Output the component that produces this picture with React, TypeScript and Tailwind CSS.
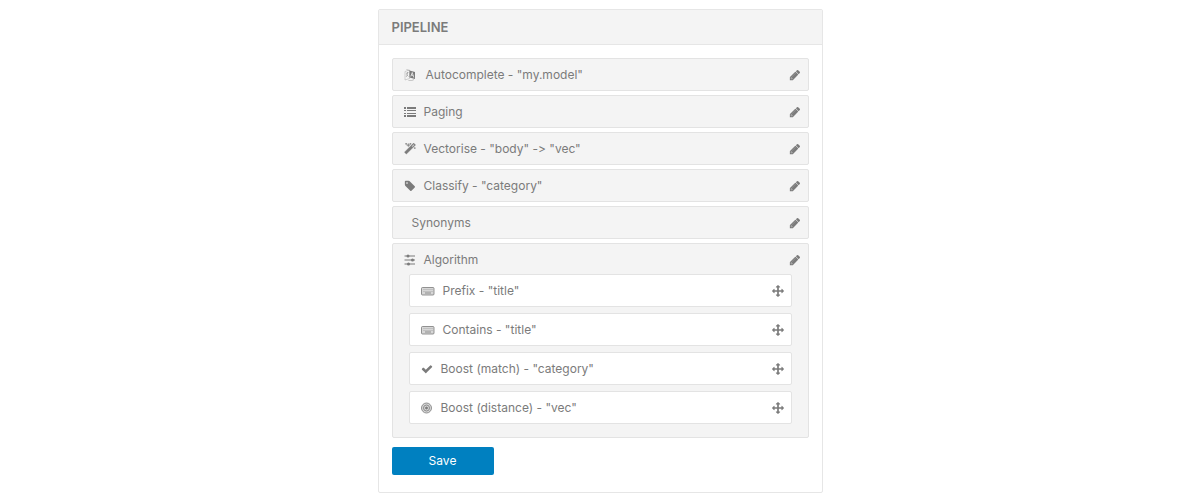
import { ReactNode } from "react";

type IconProps = { className?: string };

type Step = {
  id: string;
  label: string;
  icon?: ReactNode;
};

const PencilIcon = ({ className }: IconProps) => (
  <svg className={className} viewBox="0 0 1792 1792" fill="currentColor" aria-hidden="true">
    <path d="M491 1536l91-91-235-235-91 91v107h128v128h107zM1014 608q0-22-22-22-10 0-17 7l-542 542q-7 7-7 17 0 22 22 22 10 0 17-7l542-542q7-7 7-17zM960 416l416 416-832 832h-416v-416zM1643 512q0 53-37 90l-166 166-416-416 166-165q36-38 90-38 53 0 91 38l235 234q37 39 37 91z" />
    <path d="M960 416l416 416-832 832-416-416z" opacity="0.6" />
  </svg>
);

const MoveIcon = ({ className }: IconProps) => (
  <svg className={className} viewBox="0 0 1792 1792" fill="currentColor" aria-hidden="true">
    <path d="M1792 896q0 26-19 45l-256 256q-19 19-45 19t-45-19-19-45v-128h-384v384h128q26 0 45 19t19 45-19 45l-256 256q-19 19-45 19t-45-19l-256-256q-19-19-19-45t19-45 45-19h128v-384h-384v128q0 26-19 45t-45 19-45-19l-256-256q-19-19-19-45t19-45l256-256q19-19 45-19t45 19 19 45v128h384v-384h-128q-26 0-45-19t-19-45 19-45l256-256q19-19 45-19t45 19l256 256q19 19 19 45t-19 45-45 19h-128v384h384v-128q0-26 19-45t45-19 45 19l256 256q19 19 19 45z" />
  </svg>
);

// Two overlapping sheets, the right one filled
const LanguageIcon = () => (
  <svg className="mr-[10px] h-3 w-3 shrink-0" viewBox="0 0 24 24" fill="none" aria-hidden="true">
    <path d="M2 5l9-3v17l-9 3z" stroke="currentColor" strokeWidth="1" opacity="0.6" />
    <path d="M4 9l5-2M7 6c0 5-1 8-3 10M5 11l4 4" stroke="currentColor" strokeWidth="1.2" opacity="0.8" />
    <path d="M11 3l11 3v14l-11-3z" fill="currentColor" />
    <path d="M13.5 15l3-8 3 10M14.5 12l4 1" stroke="#f4f4f4" strokeWidth="1.5" />
    <path d="M5 1l6 2M9 23c4 1 8 0 11-2" stroke="currentColor" strokeWidth="1.2" opacity="0.7" />
  </svg>
);

const ListIcon = () => (
  <svg className="mr-2 h-3 w-3 shrink-0" viewBox="0 0 12 12" fill="currentColor" aria-hidden="true">
    <path d="M0 1h2v2H0zM0 4h2v1H0zM0 7h2v1H0zM0 9h2v2H0zM3 1h9v2H3zM3 4h9v1H3zM3 7h9v1H3zM3 9h9v2H3z" />
  </svg>
);

const MagicIcon = () => (
  <svg className="mr-2 h-3 w-3 shrink-0" viewBox="0 0 1792 1792" fill="currentColor" stroke="currentColor" strokeWidth="60" aria-hidden="true">
    <path d="M1254 581l293-293-107-107-293 293zM1702 288q0 27-18 45l-1286 1286q-18 18-45 18t-45-18l-198-198q-18-18-18-45t18-45l1286-1286q18-18 45-18t45 18l198 198q18 18 18 45zM351 90l98 30-98 30-30 98-30-98-98-30 98-30 30-98zM701 252l196 60-196 60-60 196-60-196-196-60 196-60 60-196zM1631 730l98 30-98 30-30 98-30-98-98-30 98-30 30-98zM991 90l98 30-98 30-30 98-30-98-98-30 98-30 30-98z" />
  </svg>
);

const TagIcon = () => (
  <svg className="mr-2 h-3 w-3 shrink-0" viewBox="0 0 1792 1792" fill="currentColor" aria-hidden="true">
    <path d="M576 448q0-53-37.5-90.5t-90.5-37.5-90.5 37.5-37.5 90.5 37.5 90.5 90.5 37.5 90.5-37.5 37.5-90.5zM1643 1024q0 53-37 90l-491 492q-39 37-91 37-53 0-90-37l-715-716q-38-37-64.5-101t-26.5-117v-416q0-52 38-90t90-38h416q53 0 117 26.5t102 64.5l715 714q37 39 37 91z" />
  </svg>
);

const SlidersIcon = () => (
  <svg className="mr-2 h-3 w-3 shrink-0" viewBox="0 0 24 24" fill="currentColor" aria-hidden="true">
    <path d="M1 3h21v2H1zM1 11h21v2H1zM1 19h21v2H1z" />
    <circle cx="8" cy="4" r="3" />
    <circle cx="17" cy="12" r="3" />
    <circle cx="9" cy="20" r="3" />
  </svg>
);

const KeyboardIcon = () => (
  <svg className="mr-2 h-3 w-3.5 shrink-0" viewBox="0 0 28 24" fill="none" aria-hidden="true">
    <rect x="1" y="5" width="25" height="15" rx="2" fill="currentColor" fillOpacity="0.3" stroke="currentColor" strokeWidth="2" strokeOpacity="0.8" />
    <path d="M5 9h18M5 13h18" stroke="currentColor" strokeWidth="2" strokeDasharray="2 2" opacity="0.5" />
    <path d="M8 16h12" stroke="currentColor" strokeWidth="2" opacity="0.8" />
  </svg>
);

const CheckIcon = () => (
  <svg className="mr-2 h-3 w-3 shrink-0" viewBox="0 0 1792 1792" fill="currentColor" aria-hidden="true">
    <path d="M1671 566q0 40-28 68l-724 724-136 136q-28 28-68 28t-68-28l-136-136-362-362q-28-28-28-68t28-68l136-136q28-28 68-28t68 28l294 295 656-657q28-28 68-28t68 28l136 136q28 28 28 68z" />
  </svg>
);

const BullseyeIcon = () => (
  <svg className="mr-2 h-3 w-3 shrink-0" viewBox="0 0 24 24" fill="none" stroke="currentColor" aria-hidden="true">
    <circle cx="11" cy="12" r="10" strokeWidth="2" strokeOpacity="0.8" fill="currentColor" fillOpacity="0.3" />
    <circle cx="11" cy="12" r="6" strokeWidth="2" strokeOpacity="0.8" />
    <circle cx="11" cy="12" r="2" strokeWidth="2" fill="currentColor" />
  </svg>
);

const steps: Step[] = [
  { id: "autocomplete", label: 'Autocomplete - "my.model"', icon: <LanguageIcon /> },
  { id: "paging", label: "Paging", icon: <ListIcon /> },
  { id: "vectorise", label: 'Vectorise - "body" -> "vec"', icon: <MagicIcon /> },
  { id: "classify", label: 'Classify - "category"', icon: <TagIcon /> },
  { id: "synonyms", label: "Synonyms" },
];

const rules: Step[] = [
  { id: "prefix", label: 'Prefix - "title"', icon: <KeyboardIcon /> },
  { id: "contains", label: 'Contains - "title"', icon: <KeyboardIcon /> },
  { id: "match", label: 'Boost (match) - "category"', icon: <CheckIcon /> },
  { id: "distance", label: 'Boost (distance) - "vec"', icon: <BullseyeIcon /> },
];

const StepHeading = ({ step }: { step: Step }) => (
  <div className="flex items-center">
    {step.icon ?? <span className="w-2" />}
    <span className="flex-1">{step.label}</span>
    <button type="button" aria-label={`Edit ${step.label}`} className="cursor-pointer">
      <PencilIcon className="h-3 w-3" />
    </button>
  </div>
);

const App = () => {
  return (
    <main className="px-4 py-[9px] font-['Inter',sans-serif] text-xs leading-5 text-[#7b7b7b] [font-variant-ligatures:none]">
      <section className="mx-auto max-w-[445px] rounded-xs border border-[#e6e6e6] bg-white">
        <header className="border-b border-[#e6e6e6] bg-[#f4f4f4] px-[13px] py-[7px]">
          <h1 className="text-[13px] font-semibold">PIPELINE</h1>
        </header>

        <div className="px-[13px] pt-[13px] pb-[17px]">
          <ul className="space-y-1">
            {steps.map((step) => (
              <li key={step.id} className="rounded-xs border border-[#e3e3e3] bg-[#f4f4f4] pt-[6px] pr-[7px] pb-[5px] pl-[11px]">
                <StepHeading step={step} />
              </li>
            ))}
            <li className="rounded-xs border border-[#e3e3e3] bg-[#f4f4f4] pt-[6px] pr-[7px] pb-[13px] pl-[11px]">
              <StepHeading step={{ id: "algorithm", label: "Algorithm", icon: <SlidersIcon /> }} />
              <ul className="mt-1 mr-[9px] ml-[5px] space-y-[6px]">
                {rules.map((rule) => (
                  <li key={rule.id} className="flex items-center rounded-xs border border-[#e3e3e3] bg-white pt-[6px] pr-[7px] pb-[5px] pl-[11px]">
                    {rule.icon}
                    <span className="flex-1">{rule.label}</span>
                    <MoveIcon className="h-3 w-3 cursor-move" />
                  </li>
                ))}
              </ul>
            </li>
          </ul>

          <button type="submit" className="mt-[9px] w-[102px] cursor-pointer rounded-xs bg-[#0080c0] py-1 text-white">
            Save
          </button>
        </div>
      </section>
    </main>
  );
};

export default App;
